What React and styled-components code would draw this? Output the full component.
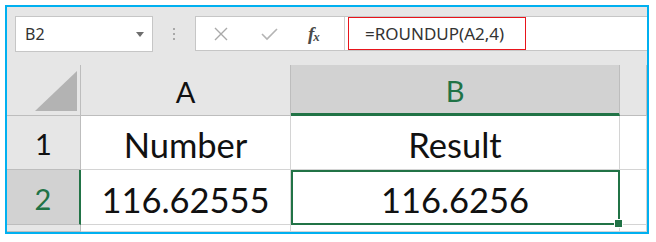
import React from "react";
import styled, { createGlobalStyle } from "styled-components";

const GREEN = "#217346";

const GlobalStyle = createGlobalStyle`
  html, body {
    margin: 0;
    padding: 0;
    background: #ffffff;
  }
  body {
    font-family: Lato, "Noto Sans", sans-serif;
  }
`;

const Frame = styled.div`
  margin: 5px 0 0 5px;
  width: 640px;
  height: 225px;
  border: 2px solid #00b0f0;
  background: #e6e6e6;
  display: flex;
  flex-direction: column;
  overflow: hidden;
`;

const Toolbar = styled.div`
  display: flex;
  align-items: flex-start;
  height: 58px;
  padding: 9px 0 0 8px;
  box-sizing: border-box;
`;

const NameBox = styled.div`
  width: 138px;
  height: 36px;
  box-sizing: border-box;
  background: #ffffff;
  border: 1px solid #c6c6c6;
  display: flex;
  align-items: center;
  justify-content: space-between;
  padding: 0 8px 0 9px;
  font-family: "Noto Sans", "Open Sans", sans-serif;
  font-size: 16px;
  color: #333;
`;

const Caret = styled.span`
  width: 0;
  height: 0;
  border-left: 4px solid transparent;
  border-right: 4px solid transparent;
  border-top: 5px solid #6e6e6e;
`;

const Dots = styled.div`
  width: 42px;
  height: 36px;
  display: flex;
  flex-direction: column;
  align-items: center;
  justify-content: center;
  gap: 3px;
  span {
    width: 2px;
    height: 2px;
    background: #a8a8a8;
  }
`;

const FormulaBar = styled.div`
  flex: 1;
  height: 35px;
  box-sizing: border-box;
  background: #ffffff;
  border: 1px solid #c6c6c6;
  border-right: none;
  display: flex;
  align-items: stretch;
`;

const Buttons = styled.div`
  width: 149px;
  border-right: 1px solid #d0d0d0;
  display: flex;
  align-items: center;
  padding-left: 17px;
  gap: 32px;
  box-sizing: border-box;
`;

const Fx = styled.span`
  font-family: "Liberation Serif", serif;
  font-style: italic;
  font-weight: bold;
  font-size: 19px;
  color: #4a4a4a;
  letter-spacing: -1px;
  margin-left: -2px;
  sub {
    font-size: 13px;
    vertical-align: -1px;
  }
`;

const Input = styled.div`
  flex: 1;
  display: flex;
  align-items: stretch;
  padding: 0 0 0 3px;
`;

const Highlight = styled.div`
  width: 178px;
  box-sizing: border-box;
  border: 1px solid #e8141b;
  display: flex;
  align-items: center;
  padding-left: 16px;
  font-family: "Noto Sans", "Open Sans", sans-serif;
  font-size: 17px;
  color: #333;
`;

const Sheet = styled.div`
  flex: 1;
  display: grid;
  grid-template-columns: 74px 210px 329px 1fr;
  grid-template-rows: 51px 54px 55px 1fr;
`;

const Cell = styled.div`
  position: relative;
  box-sizing: border-box;
  display: flex;
  align-items: center;
  justify-content: center;
  background: ${(p) => (p.$header ? (p.$active ? "#d2d2d2" : "#e6e6e6") : "#ffffff")};
  border-right: 1px solid ${(p) => (p.$header ? "#bdbdbd" : "#d4d4d4")};
  border-bottom: 1px solid ${(p) => (p.$header ? "#bdbdbd" : "#d4d4d4")};
  font-size: ${(p) => (p.$header ? "29px" : "34.5px")};
  color: ${(p) => (p.$active ? GREEN : "#111")};
  padding-top: ${(p) => (p.$header ? "2px" : "4px")};
  ${(p) => p.$colActive && `border-bottom: 3px solid ${GREEN};`}
  ${(p) => p.$rowActive && `border-right: 2px solid ${GREEN};`}
  ${(p) => p.$selected && `outline: 2px solid ${GREEN}; outline-offset: -2px; z-index: 1;`}
`;

const Corner = styled(Cell)`
  align-items: flex-end;
  justify-content: flex-end;
  padding: 0 3px 4px 0;
`;

const Handle = styled.span`
  position: absolute;
  right: -4px;
  bottom: -4px;
  width: 7px;
  height: 7px;
  background: ${GREEN};
  border: 1px solid #ffffff;
`;

const XIcon = () => (
  <svg width="16" height="16" viewBox="0 0 16 16">
    <path d="M2 2 L14 14 M14 2 L2 14" stroke="#a9a9a9" strokeWidth="1.4" fill="none" />
  </svg>
);

const CheckIcon = () => (
  <svg width="17" height="14" viewBox="0 0 17 14">
    <path d="M1 7 L6 12 L16 2" stroke="#b4b4b4" strokeWidth="1.6" fill="none" />
  </svg>
);

const Triangle = () => (
  <svg width="42" height="40" viewBox="0 0 42 40">
    <polygon points="0,40 42,0 42,40" fill="#b3b3b3" />
  </svg>
);

export default function App() {
  return (
    <>
      <GlobalStyle />
      <Frame>
        <Toolbar>
          <NameBox>
            B2
            <Caret />
          </NameBox>
          <Dots>
            <span />
            <span />
            <span />
          </Dots>
          <FormulaBar>
            <Buttons>
              <XIcon />
              <CheckIcon />
              <Fx>
                f<sub>x</sub>
              </Fx>
            </Buttons>
            <Input>
              <Highlight>=ROUNDUP(A2,4)</Highlight>
            </Input>
          </FormulaBar>
        </Toolbar>
        <Sheet>
          <Corner $header>
            <Triangle />
          </Corner>
          <Cell $header>A</Cell>
          <Cell $header $active $colActive>
            B
          </Cell>
          <Cell $header />

          <Cell $header>1</Cell>
          <Cell>Number</Cell>
          <Cell>Result</Cell>
          <Cell />

          <Cell $header $active $rowActive>
            2
          </Cell>
          <Cell>116.62555</Cell>
          <Cell $selected>
            116.6256
            <Handle />
          </Cell>
          <Cell />

          <Cell $header />
          <Cell />
          <Cell />
          <Cell />
        </Sheet>
      </Frame>
    </>
  );
}
